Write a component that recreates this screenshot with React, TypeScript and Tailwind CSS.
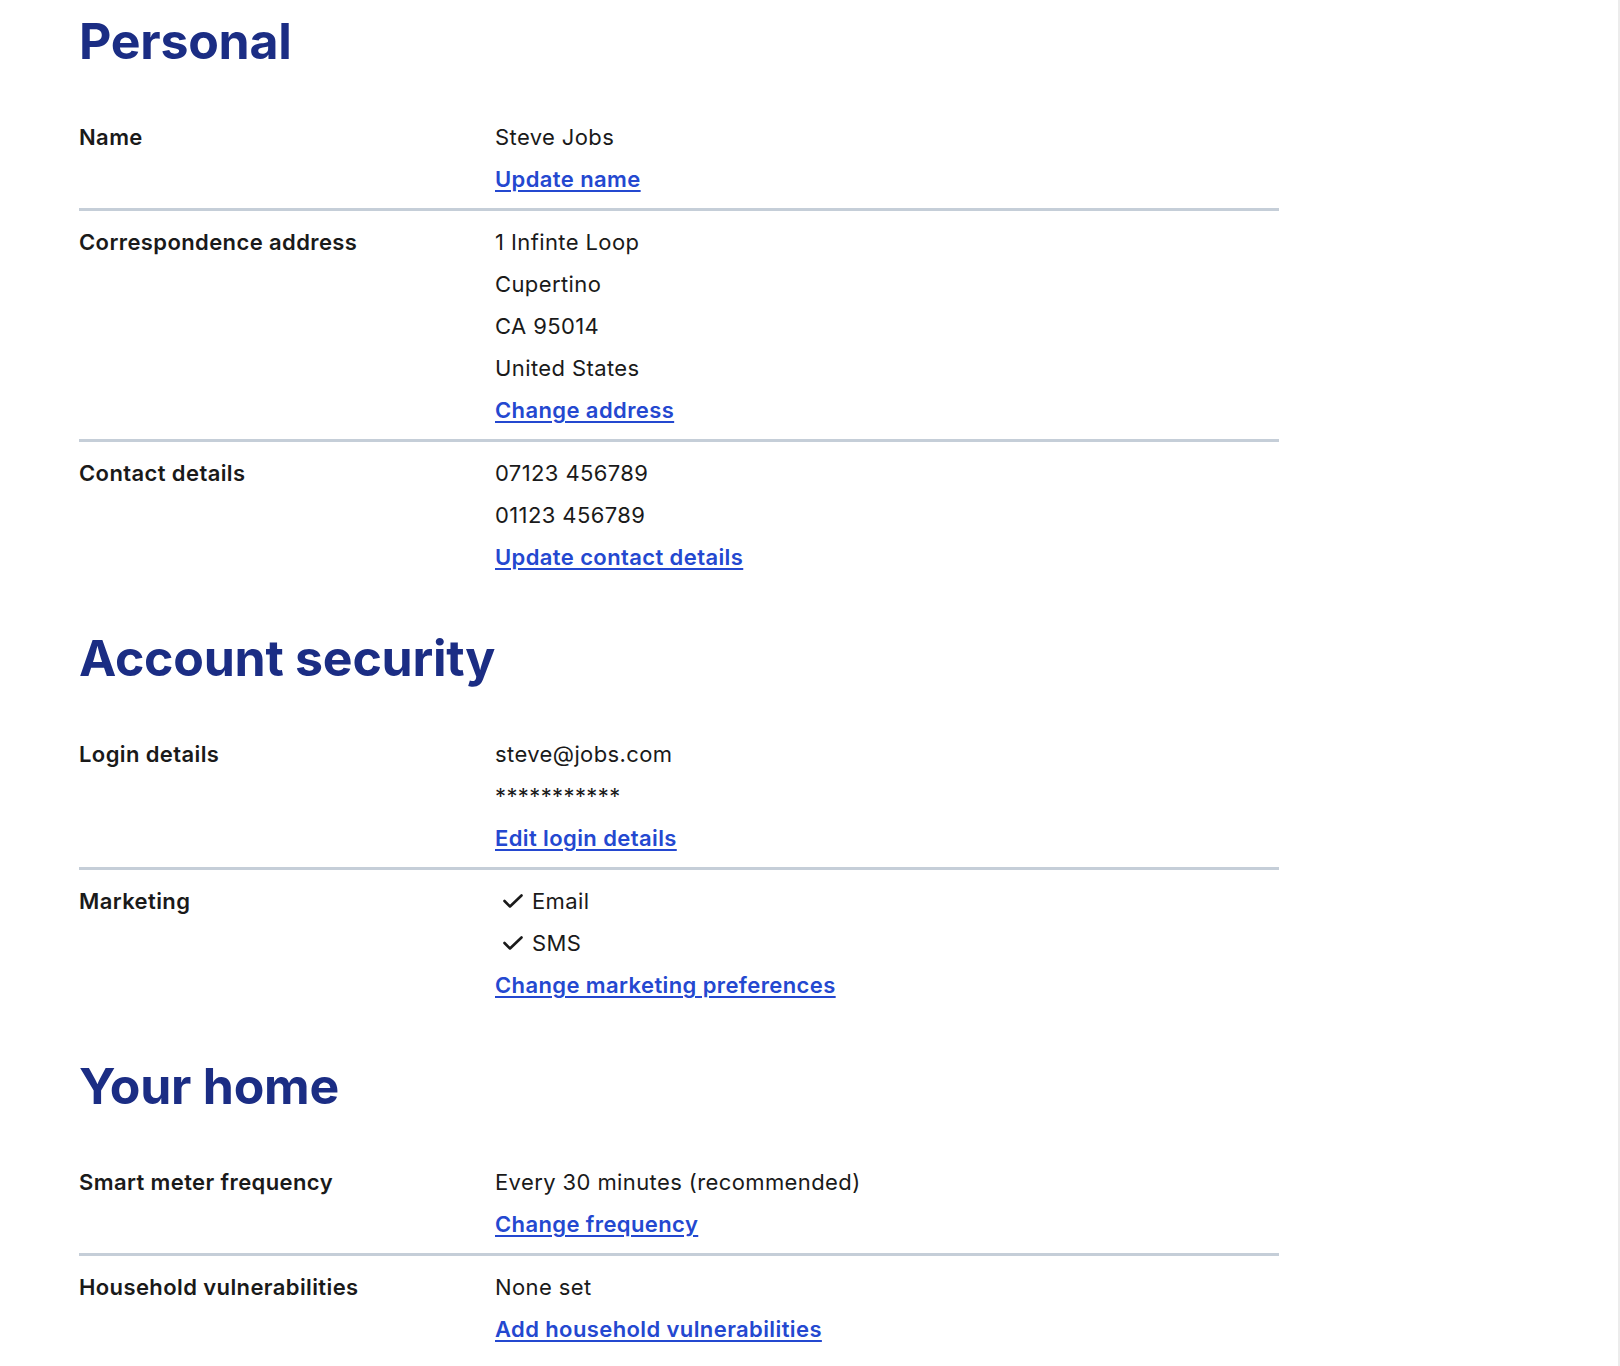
import { Fragment } from "react"

type Row = {
  label: string
  lines: string[]
  checks?: string[]
  link: string
}

type Section = {
  title: string
  rows: Row[]
}

const sections: Section[] = [
  {
    title: "Personal",
    rows: [
      { label: "Name", lines: ["Steve Jobs"], link: "Update name" },
      {
        label: "Correspondence address",
        lines: ["1 Infinte Loop", "Cupertino", "CA 95014", "United States"],
        link: "Change address",
      },
      {
        label: "Contact details",
        lines: ["07123 456789", "01123 456789"],
        link: "Update contact details",
      },
    ],
  },
  {
    title: "Account security",
    rows: [
      {
        label: "Login details",
        lines: ["steve@jobs.com", "***********"],
        link: "Edit login details",
      },
      {
        label: "Marketing",
        lines: [],
        checks: ["Email", "SMS"],
        link: "Change marketing preferences",
      },
    ],
  },
  {
    title: "Your home",
    rows: [
      {
        label: "Smart meter frequency",
        lines: ["Every 30 minutes (recommended)"],
        link: "Change frequency",
      },
      {
        label: "Household vulnerabilities",
        lines: ["None set"],
        link: "Add household vulnerabilities",
      },
    ],
  },
]

function CheckMark() {
  return (
    <svg width="20" height="14" viewBox="0 0 20 14" fill="none" className="shrink-0">
      <path d="M1.5 7 L7 12.5 L18.5 1.5" stroke="#1a1a1a" strokeWidth="2.6" strokeLinecap="round" strokeLinejoin="round" />
    </svg>
  )
}

export default function App() {
  return (
    <div className="min-h-screen w-full bg-white border-r-2 border-[#ececec] font-['Inter','Liberation_Sans',sans-serif] text-[#1a1a1a]">
      <div className="w-[1279px] pl-[79px] pt-[7px] pb-[30px]">
        {sections.map((section, si) => (
          <Fragment key={section.title}>
            {/* section heading */}
            <h2
              className={`text-[50px] leading-[68px] font-bold tracking-[-0.005em] text-[#1b2d84] mb-[31px] ${
                si === 0 ? "mt-0" : "mt-[38px]"
              }`}
            >
              {section.title}
            </h2>

            {section.rows.map((row, ri) => (
              <div
                key={row.label}
                className={`grid grid-cols-[416px_1fr] pt-[10px] pb-[8px] text-[22px] leading-[42px] tracking-[0.018em] ${
                  ri < section.rows.length - 1 ? "border-b-[3px] border-[#c5ced8]" : ""
                }`}
              >
                <div className="font-semibold">{row.label}</div>
                <div className="flex flex-col">
                  {row.lines.map((l) => (
                    <span key={l}>{l}</span>
                  ))}
                  {row.checks?.map((c) => (
                    <span key={c} className="flex items-center gap-[9px] pl-[8px]">
                      <CheckMark />
                      {c}
                    </span>
                  ))}
                  <a
                    href="#"
                    className="self-start font-semibold text-[#2448d0] underline decoration-2 underline-offset-[3px]"
                  >
                    {row.link}
                  </a>
                </div>
              </div>
            ))}
          </Fragment>
        ))}
      </div>
    </div>
  )
}
